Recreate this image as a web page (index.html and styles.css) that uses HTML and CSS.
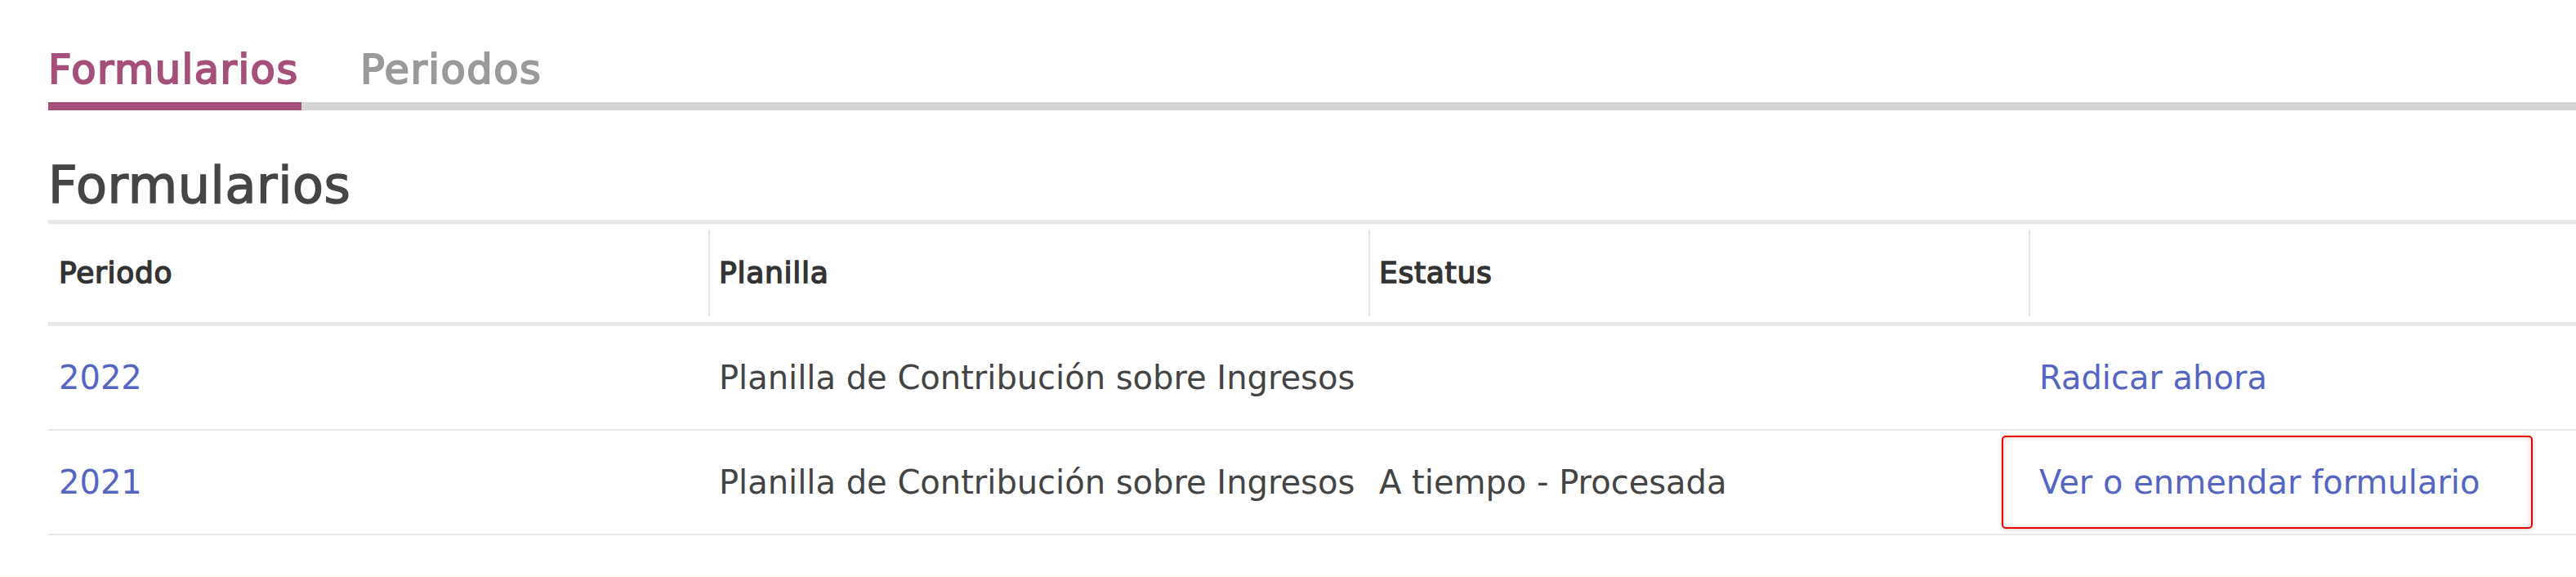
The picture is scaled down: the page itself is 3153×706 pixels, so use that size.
FILE: index.html
```html
<!DOCTYPE html>
<html lang="es">
<head>
<meta charset="utf-8">
<title>Formularios</title>
<link rel="stylesheet" href="styles.css">
</head>
<body>
<div class="page">
  <nav class="tabs">
    <a class="tab tab-active" href="#">Formularios</a>
    <a class="tab" href="#">Periodos</a>
  </nav>
  <h1 class="title">Formularios</h1>
  <div class="table">
    <div class="row row-head">
      <div class="cell">Periodo</div>
      <div class="cell cell-div">Planilla</div>
      <div class="cell cell-div">Estatus</div>
      <div class="cell cell-div"></div>
    </div>
    <div class="row">
      <div class="cell"><a class="link" href="#">2022</a></div>
      <div class="cell">Planilla de Contribución sobre Ingresos</div>
      <div class="cell"></div>
      <div class="cell"><a class="link" href="#">Radicar ahora</a></div>
    </div>
    <div class="row">
      <div class="cell"><a class="link" href="#">2021</a></div>
      <div class="cell">Planilla de Contribución sobre Ingresos</div>
      <div class="cell">A tiempo - Procesada</div>
      <div class="cell cell-action"><a class="link" href="#">Ver o enmendar formulario</a><span class="highlight"></span></div>
    </div>
  </div>
</div>
</body>
</html>
```
FILE: styles.css
```css
html, body {
  margin: 0;
  padding: 0;
  background: #ffffff;
}

body {
  width: 3153px;
  height: 706px;
  overflow: hidden;
  font-family: "DejaVu Sans", "Liberation Sans", sans-serif;
}

.page {
  padding-left: 59px;
  height: 705px;
  border-bottom: 1px solid #fbf8ef;
}

.tabs {
  display: flex;
  gap: 72px;
  padding-top: 55px;
  border-bottom: 10px solid #d5d5d5;
}

.tab {
  font-size: 49.5px;
  line-height: 60px;
  font-weight: normal;
  letter-spacing: 0.03em;
  -webkit-text-stroke: 2px currentColor;
  color: #9a9a9a;
  text-decoration: none;
  padding-bottom: 10px;
  border-bottom: 10px solid transparent;
  margin-bottom: -10px;
}

.tab-active {
  width: 310px;
  color: #a54f7b;
  border-bottom-color: #a54f7b;
}

.title {
  margin: 56px 0 6px;
  font-size: 62px;
  line-height: 72px;
  font-weight: normal;
  letter-spacing: 0.01em;
  -webkit-text-stroke: 1.5px currentColor;
  color: #454545;
}

.table {
  width: 3232px;
  border-top: 5px solid #e8e8e8;
}

.row {
  display: grid;
  grid-template-columns: repeat(4, 808px);
  height: 126px;
  border-bottom: 2px solid #e8e8e8;
}

.row-head {
  height: 120px;
  border-bottom-width: 5px;
}

.cell {
  position: relative;
  display: flex;
  align-items: center;
  padding-left: 13px;
  font-size: 40px;
  line-height: 48px;
  color: #444444;
  white-space: nowrap;
}

.row-head .cell {
  font-size: 36px;
  font-weight: normal;
  letter-spacing: 0.02em;
  -webkit-text-stroke: 1.5px currentColor;
  color: #333333;
}

.cell-div {
  background: linear-gradient(#e6e6e6, #e6e6e6) left 0 top 7px / 2px calc(100% - 14px) no-repeat;
}

.link {
  color: #5565c2;
  text-decoration: none;
}

.highlight {
  position: absolute;
  left: -33px;
  top: 6px;
  width: 650px;
  height: 114px;
  box-sizing: border-box;
  border: 2px solid #f20000;
  border-radius: 5px;
  box-shadow: 0 1px 6px rgba(0, 0, 0, 0.18), inset 0 0 6px rgba(0, 0, 0, 0.18);
  pointer-events: none;
}
```
